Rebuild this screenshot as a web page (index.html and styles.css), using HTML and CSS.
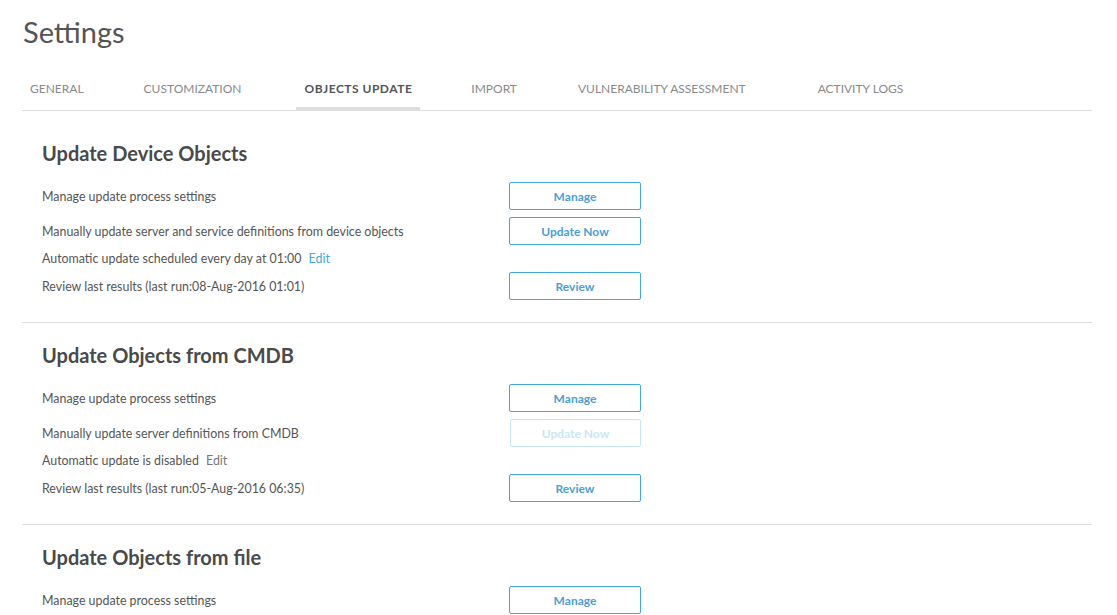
FILE: index.html
```html
<!DOCTYPE html>
<html lang="en">
<head>
    <meta charset="UTF-8">
    <meta name="viewport" content="width=device-width, initial-scale=1.0">
    <title>Settings</title>
    <link rel="stylesheet" href="styles.css">
</head>
<body>

<div class="page">
    <h1 class="title">Settings</h1>

    <div class="tabs">
        <div class="tab">General</div>
        <div class="tab">Customization</div>
        <div class="tab active">Objects Update</div>
        <div class="tab">Import</div>
        <div class="tab">Vulnerability Assessment</div>
        <div class="tab">Activity Logs</div>
    </div>

    <div class="section first">
        <h2>Update Device Objects</h2>
        <div class="row">
            <span class="label">Manage update process settings</span>
            <button class="btn">Manage</button>
        </div>
        <div class="row">
            <span class="label">Manually update server and service definitions from device objects</span>
            <button class="btn">Update Now</button>
        </div>
        <div class="row plain">
            <span class="label">Automatic update scheduled every day at 01:00 <a class="edit">Edit</a></span>
        </div>
        <div class="row">
            <span class="label">Review last results (last run:08-Aug-2016 01:01)</span>
            <button class="btn">Review</button>
        </div>
    </div>

    <div class="section">
        <h2>Update Objects from CMDB</h2>
        <div class="row">
            <span class="label">Manage update process settings</span>
            <button class="btn">Manage</button>
        </div>
        <div class="row">
            <span class="label">Manually update server definitions from CMDB</span>
            <button class="btn disabled">Update Now</button>
        </div>
        <div class="row plain">
            <span class="label">Automatic update is disabled <a class="edit off">Edit</a></span>
        </div>
        <div class="row">
            <span class="label">Review last results (last run:05-Aug-2016 06:35)</span>
            <button class="btn">Review</button>
        </div>
    </div>

    <div class="section">
        <h2>Update Objects from file</h2>
        <div class="row">
            <span class="label">Manage update process settings</span>
            <button class="btn">Manage</button>
        </div>
    </div>
</div>

</body>
</html>
```

FILE: styles.css
```css
body {
    margin: 0;
    font-family: Lato, "Open Sans", sans-serif;
    color: #555;
    background: #fff;
}
.page {
    padding: 0 25px 0 22px;
}
.title {
    margin: 0;
    padding: 14px 0 0 1px;
    font-size: 29px;
    line-height: 36px;
    font-weight: 400;
    color: #555;
}
.tabs {
    display: flex;
    margin-top: 31px;
    border-bottom: 1px solid #ddd;
}
.tab {
    position: relative;
    padding: 0 8px 13px;
    margin-right: 44px;
    font-size: 12px;
    line-height: 16px;
    text-transform: uppercase;
    color: #8a8a8a;
}
.tab:nth-child(2) { margin-right: 47px; }
.tab:nth-child(3) { margin-right: 43px; }
.tab:nth-child(4) { margin-right: 45px; }
.tab:nth-child(5) { margin-right: 56px; }
.tab.active {
    font-weight: 700;
    letter-spacing: 0.5px;
    color: #555;
}
.tab.active::after {
    content: "";
    position: absolute;
    left: 0;
    right: 0;
    bottom: -1px;
    height: 4px;
    background: #ddd;
}
.section {
    padding: 20px 0 22px 20px;
    border-bottom: 1px solid #ddd;
}
.section.first {
    padding-top: 30px;
}
.section:last-child {
    border-bottom: none;
}
.section h2 {
    margin: 0 0 17px;
    font-size: 20px;
    line-height: 24px;
    font-weight: 700;
    color: #4a4a4a;
}
.row {
    display: grid;
    grid-template-columns: 467px 132px;
    align-items: center;
    height: 28px;
    margin-bottom: 7px;
}
.row:last-child {
    margin-bottom: 0;
}
.row.plain {
    height: 13px;
}
.label {
    font-size: 12.4px;
    line-height: 13px;
    color: #555;
}
.edit {
    margin-left: 4px;
    color: #3fa9e0;
    cursor: pointer;
}
.edit.off {
    color: #777;
}
.btn {
    height: 28px;
    padding: 0;
    border: 1px solid #3fa9e0;
    border-radius: 2px;
    background: #fff;
    font-family: Lato, "Open Sans", sans-serif;
    font-size: 12px;
    font-weight: 700;
    color: #4a9fd6;
    cursor: pointer;
}
.btn.disabled {
    margin-left: 1px;
    border-color: #c6e5f6;
    color: #c9e6f6;
}
```
